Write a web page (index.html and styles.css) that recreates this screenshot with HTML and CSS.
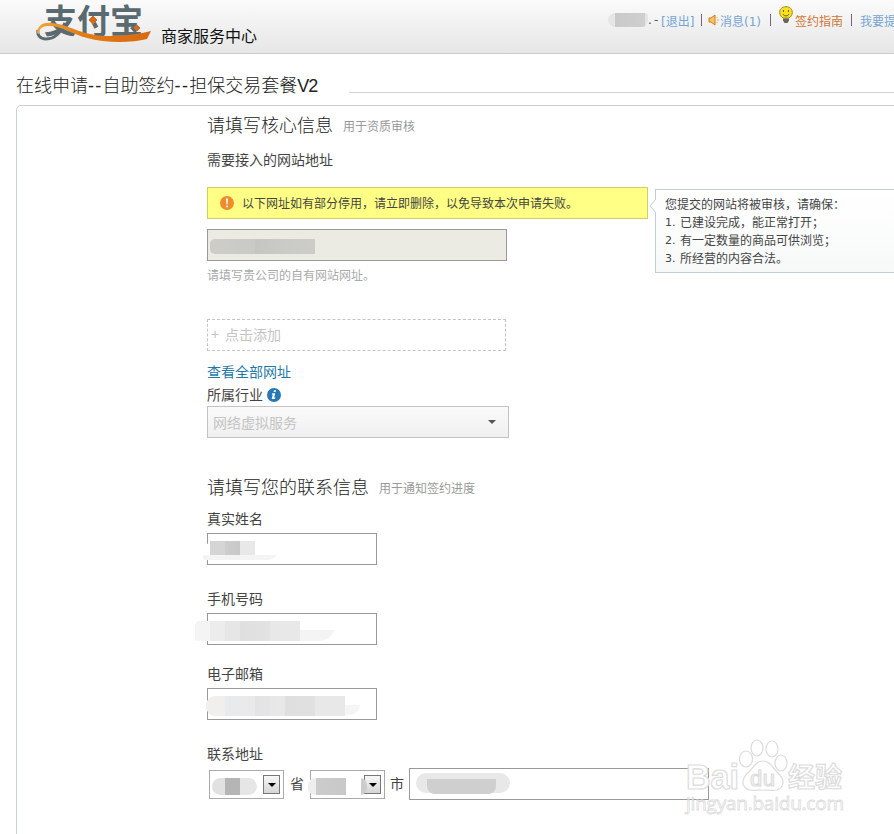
FILE: index.html
```html
<!DOCTYPE html>
<html lang="zh-CN">
<head>
    <meta charset="UTF-8">
    <meta name="viewport" content="width=device-width, initial-scale=1.0">
    <title>商家服务中心</title>
    <link rel="stylesheet" href="styles.css">
</head>
<body>
    <!-- Header -->
    <div class="header">
        <div class="logo">
            <span class="logo-text">支付宝</span>
            <svg class="logo-line" width="116" height="44" viewBox="0 0 116 44">
                <defs>
                    <linearGradient id="swoosh" x1="0" x2="1" y1="0" y2="0">
                        <stop offset="0" stop-color="#f0a63a"/>
                        <stop offset="0.4" stop-color="#e27b16"/>
                        <stop offset="1" stop-color="#d9690f"/>
                    </linearGradient>
                </defs>
                <path d="M29 23C24 33 19 39 10 39C4 39 1 35 2 30" fill="none" stroke="#596a70" stroke-width="3"/>
                <path d="M1 33C1 25 8 22 16 23C34 25 45 35 69 36C84 36 101 35 115 31L111 39C95 43 69 43 51 38C34 33 23 25 12 26C6 26 3 29 3 34Z" fill="url(#swoosh)"/>
                <path d="M57 16l4 4-4 4-4-4zM101 25l3 3-3 3-3-3z" fill="#d9691d" stroke="#d9691d"/>
            </svg>
        </div>
        <h1 class="site-name">商家服务中心</h1>
        <div class="top-links">
            <span class="blur-user"></span>
            <span class="dash">.&nbsp;-</span>
            <a class="logout">[退出]</a>
            <span class="line line-1"></span>
            <svg class="horn" width="11" height="12" viewBox="0 0 11 12">
                <path d="M1 4h2l4-3v10l-4-3H1z" fill="#f9c45c" stroke="#d07a1e"/>
                <path d="M9 3v1M9 6h2M9 8v1" stroke="#e8a758"/>
            </svg>
            <a class="news">消息(1)</a>
            <span class="line line-2"></span>
            <svg class="bulb" width="14" height="18" viewBox="0 0 14 18">
                <path d="M7 .7C3 .7.7 3.300.7 6.500c0 2.500 1.500 4.500 3.500 5.500h5.600c2-1 3.500-3 3.500-5.500C13.300 3.300 11 .7 7 .7z" fill="#f8e11f" stroke="#a08512"/>
                <path d="M4 12.500h6v2L8.500 17h-3L4 14.500z" fill="#66665f"/>
                <path d="M4.500 4v2M9.500 4v2M4 8c1 2.500 5 2.500 6 0" fill="none" stroke="#6d5d14"/>
            </svg>
            <a class="guide">签约指南</a>
            <span class="line line-3"></span>
            <a class="suggest">我要提</a>
        </div>
    </div>

    <div class="title-row">
        <h2 class="title">在线申请<span class="dashes">--</span>自助签约<span class="dashes">--</span>担保交易套餐<span class="version">V2</span></h2>
        <div class="title-line"></div>
    </div>

    <div class="panel">
        <!-- Core information -->
        <div class="section-title">
            <h3>请填写核心信息</h3>
            <span>用于资质审核</span>
        </div>
        <div class="label site-label">需要接入的网站地址</div>

        <div class="notice">
            <svg width="14" height="14" viewBox="0 0 14 14">
                <circle cx="7" cy="7" r="7" fill="#f08c2c"/>
                <path d="M6 2.500h2L7.600 8.300H6.400zM6.200 9.500h1.600v1.800H6.200z" fill="#fff"/>
            </svg>
            <span>以下网址如有部分停用，请立即删除，以免导致本次申请失败。</span>
            <div class="tip">
                <svg class="tip-arrow" width="7" height="14" viewBox="0 0 7 14">
                    <path d="M7 0L1 7l6 7" fill="#fff" stroke="#c4cdd6"/>
                </svg>
                <p>您提交的网站将被审核，请确保：</p>
                <p><span class="num">1.</span>已建设完成，能正常打开；</p>
                <p><span class="num">2.</span>有一定数量的商品可供浏览；</p>
                <p><span class="num">3.</span>所经营的内容合法。</p>
            </div>
        </div>

        <div class="field site-field">
            <input type="text" disabled>
            <span class="blur blur-site"></span>
        </div>
        <div class="hint">请填写贵公司的自有网站网址。</div>

        <div class="add-box"><span class="plus">+</span>点击添加</div>
        <a class="all-sites">查看全部网址</a>
        <div class="label trade-label">
            所属行业
            <svg width="14" height="14" viewBox="0 0 14 14">
                <circle cx="7" cy="7" r="7" fill="#2878b6"/>
                <path d="M7 2.300h2l-.4 1.800h-2zM5.200 5.200h3L7.200 9.600h1.200l-.3 1.500H4.700L5.800 6.600h-1z" fill="#fff"/>
            </svg>
        </div>
        <div class="select">
            <span>网络虚拟服务</span>
            <i class="arrow"></i>
        </div>

        <!-- Contact information -->
        <div class="section-title contact-title">
            <h3>请填写您的联系信息</h3>
            <span>用于通知签约进度</span>
        </div>
        <div class="form-group name-group">
            <div class="label">真实姓名</div>
            <div class="field">
                <input type="text">
                <span class="blur blur-name-tail"></span>
                <span class="blur blur-name"></span>
            </div>
        </div>
        <div class="form-group phone-group">
            <div class="label">手机号码</div>
            <div class="field">
                <input type="text">
                <span class="blur blur-phone-tail"></span>
                <span class="blur blur-phone"></span>
            </div>
        </div>
        <div class="form-group mail-group">
            <div class="label">电子邮箱</div>
            <div class="field">
                <input type="text">
                <span class="blur blur-mail-tail"></span>
                <span class="blur blur-mail"></span>
            </div>
        </div>
        <div class="form-group">
            <div class="label">联系地址</div>
            <div class="address">
                <div class="small-select">
                    <span class="blur blur-province"></span>
                    <span class="select-btn"><i class="arrow"></i></span>
                </div>
                <span class="unit">省</span>
                <div class="small-select">
                    <span class="blur blur-city"></span>
                    <span class="select-btn"><i class="arrow"></i></span>
                </div>
                <span class="unit">市</span>
                <div class="field address-field">
                    <input type="text">
                    <span class="blur blur-address-top"></span>
                    <span class="blur blur-address"></span>
                </div>
            </div>
        </div>
    </div>

    <!-- Watermark -->
    <svg class="watermark" width="162" height="84" viewBox="0 0 162 84">
        <g class="paw">
            <ellipse cx="62" cy="22" rx="6.500" ry="8"/>
            <ellipse cx="73" cy="11" rx="6" ry="8"/>
            <ellipse cx="88" cy="12" rx="6" ry="8"/>
            <ellipse cx="97" cy="26" rx="6" ry="8"/>
            <path d="M79 24C72 24 70 30 65 35C59 40 58 45 60 49C63 55 71 53 79 53C88 53 95 55 98 49C101 43 97 39 93 35C88 30 86 24 79 24Z"/>
        </g>
        <g class="mark-text">
            <text x="2" y="52" font-size="35" textLength="53" lengthAdjust="spacingAndGlyphs">Bai</text>
            <text class="mark-du" x="66" y="49" font-size="22" textLength="25">du</text>
            <text x="104" y="50" font-size="27">经验</text>
            <text class="mark-url" x="2" y="73" font-size="19" textLength="158">jingyan.baidu.com</text>
        </g>
    </svg>
</body>
</html>
```

FILE: styles.css
```css
* {
    margin: 0;
    padding: 0;
    box-sizing: border-box;
}

body {
    font-family: "Liberation Sans", "Noto Sans CJK SC", sans-serif;
    font-size: 14px;
    font-weight: 400;
    color: #444;
    background: #fff;
    width: 894px;
    height: 834px;
    overflow: hidden;
    position: relative;
}

svg {
    flex-shrink: 0;
    display: block;
}

/* Header */
.header {
    height: 54px;
    display: flex;
    padding-left: 36px;
    background: linear-gradient(#fbfbfb, #e6e6e6);
    border-bottom: 1px solid #ccc;
    overflow: hidden;
}

.logo {
    position: relative;
    width: 116px;
    height: 44px;
    flex-shrink: 0;
}

.logo-text {
    display: block;
    padding-left: 8px;
    font-family: "Noto Sans CJK SC", sans-serif;
    font-size: 33px;
    font-weight: 700;
    line-height: 39px;
    color: #596a70;
    white-space: nowrap;
}

.logo-line {
    position: absolute;
    left: 0;
    top: 0;
}

.site-name {
    width: 96px;
    margin-left: 9px;
    font-size: 16px;
    font-weight: 400;
    line-height: 73px;
    color: #111;
    white-space: nowrap;
}

.top-links {
    display: flex;
    align-items: center;
    height: 40px;
    margin-left: 351px;
    font-family: "DejaVu Sans", "Noto Sans CJK SC", sans-serif;
    font-size: 12px;
    white-space: nowrap;
    color: #555;
}

.top-links > * {
    flex-shrink: 0;
}

.blur-user {
    width: 40px;
    height: 14px;
    border-radius: 7px 3px 6px 7px;
    background: linear-gradient(90deg, #e6e6e6 7px, #c9c9c9 7px, #cfcfcf 37px, #e6e6e6 37px);
}

.dash {
    width: 13px;
    letter-spacing: -0.8px;
}

.logout,
.news,
.suggest {
    color: #75a5d3;
}

.logout {
    width: 34px;
}

.line {
    width: 1px;
    height: 12px;
    background: #75647c;
}

.line-1 {
    margin: 0 6px;
}

.news {
    width: 42px;
    margin-left: 1px;
}

.line-2 {
    margin: 0 8px;
}

.bulb {
    margin-bottom: 10px;
}

.guide {
    width: 48px;
    margin-left: 2px;
    color: #cf7635;
}

.line-3 {
    margin: 0 8px;
}

/* Page title */
.title-row {
    display: flex;
    align-items: center;
    height: 51px;
    padding: 12px 0 0 16px;
}

.title {
    width: 301px;
    margin-right: 32px;
    font-size: 18px;
    font-weight: 300;
    line-height: 26px;
    white-space: nowrap;
    color: #222;
}

.dashes {
    letter-spacing: 1.3px;
}

.version {
    letter-spacing: -1px;
}

.title-line {
    flex: 1;
    height: 1px;
    margin-top: 13px;
    background: #ccd3d3;
}

/* Main panel */
.panel {
    width: 900px;
    height: 760px;
    padding-left: 190px;
    border: 1px solid #c8cfcf;
    border-radius: 5px;
    margin-left: 16px;
}

.section-title {
    display: flex;
    align-items: center;
    height: 38px;
    padding-bottom: 2px;
}

.section-title h3 {
    font-size: 18px;
    font-weight: 300;
    color: #222;
}

.section-title span {
    margin: 3px 0 0 10px;
    font-size: 12px;
    color: #999;
}

.label {
    height: 24px;
    line-height: 24px;
}

.site-label {
    margin: 4px 0 15px;
}

/* Notice and tip */
.notice {
    position: relative;
    display: flex;
    align-items: center;
    gap: 8px;
    width: 441px;
    height: 32px;
    padding-left: 12px;
    font-size: 12px;
    background: #ffff85;
    border: 1px solid #d3cd68;
}

.notice > span {
    padding-bottom: 1px;
    white-space: nowrap;
}

.tip {
    position: absolute;
    left: 447px;
    top: 1px;
    width: 260px;
    height: 84px;
    padding: 6px 9px;
    white-space: nowrap;
    background: linear-gradient(#fff, #f7f9f9);
    border: 1px solid #c4cdd6;
}

.tip p {
    display: flex;
    height: 18px;
    line-height: 18px;
}

.tip-arrow {
    position: absolute;
    left: -7px;
    top: 9px;
}

.num {
    width: 15px;
    font-family: "DejaVu Sans", sans-serif;
    font-size: 11px;
}

/* Fields */
.field {
    position: relative;
    width: 170px;
    height: 32px;
}

.field input {
    display: block;
    width: 100%;
    height: 100%;
    background: #fff;
    border: 1px solid #999;
}

.site-field {
    width: 300px;
    margin-top: 10px;
}

.site-field input {
    background: #ebebe4;
}

.hint {
    height: 58px;
    padding-top: 5px;
    font-size: 12px;
    line-height: 20px;
    color: #aaa;
}

.add-box {
    display: flex;
    align-items: center;
    width: 299px;
    height: 32px;
    padding: 0 0 2px 3px;
    border: 1px dashed #c4c4c4;
    color: #c4c4c4;
}

.plus {
    width: 14px;
}

.all-sites {
    display: block;
    margin-top: 10px;
    height: 22px;
    line-height: 22px;
    color: #1f79a9;
}

.trade-label {
    display: flex;
    align-items: center;
    gap: 4px;
    height: 23px;
}

.select {
    display: flex;
    align-items: center;
    justify-content: space-between;
    width: 302px;
    height: 32px;
    padding: 0 12px 1px 5px;
    border: 1px solid #c3c3c3;
    background: linear-gradient(#fafafa, #f0f0f0);
    color: #c4c4c4;
}

.arrow {
    border: 4px solid transparent;
    border-top-color: #555;
    border-bottom: 0;
}

.contact-title {
    margin-top: 30px;
}

.form-group .label {
    margin-bottom: 2px;
}

.name-group {
    margin: 1px 0 22px;
}

.phone-group {
    margin-bottom: 17px;
}

.mail-group {
    margin-bottom: 22px;
}

.address {
    display: flex;
    align-items: center;
    padding-left: 2px;
}

.small-select {
    position: relative;
    display: flex;
    justify-content: flex-end;
    align-items: center;
    width: 75px;
    height: 29px;
    padding-right: 3px;
    margin-top: 1px;
    border: 1px solid #aaa;
}

.select-btn {
    display: flex;
    align-items: center;
    justify-content: center;
    width: 17px;
    height: 19px;
    border: 1px solid #777;
    background: linear-gradient(#f7f7f7, #d5d5d5);
}

.select-btn .arrow {
    border-top-color: #000;
}

.unit {
    width: 26px;
    text-align: center;
    line-height: 30px;
}

.address .unit:nth-of-type(2) {
    width: 24px;
}

.address-field {
    width: 300px;
}

/* Hidden private values */
.blur {
    position: absolute;
    display: block;
}

.blur-site {
    left: 3px;
    top: 10px;
    width: 105px;
    height: 15px;
    border-radius: 5px 0 0 5px;
    background: linear-gradient(90deg, #cdcdc9, #c9c9c5 45px, #c5c5c1 45px, #cacac7 75px, #ccccc9);
}

.blur-name {
    left: 3px;
    top: 8px;
    width: 45px;
    height: 14px;
    background: linear-gradient(90deg, #d5d5d5 15px, #cecece 15px, #c8c8c8 30px, #e8e8e8 30px);
}

.blur-name-tail {
    left: -4px;
    top: 10px;
    width: 77px;
    height: 17px;
    border-radius: 8px 0 14px 3px;
    background: linear-gradient(#fff 12px, #f4f4f4 12px);
}

.blur-phone {
    left: 3px;
    top: 8px;
    width: 90px;
    height: 20px;
    background: linear-gradient(90deg, #ececec 15px, #e6e6e6 15px, #e6e6e6 30px, #dfdfdf 30px, #e2e2e2 60px, #e8e8e8 60px);
}

.blur-phone-tail {
    left: -12px;
    top: 8px;
    width: 140px;
    height: 20px;
    border-radius: 5px 0 16px 3px;
    background: linear-gradient(90deg, #f4f4f4 15px, transparent 15px, transparent 105px, #f4f4f4 105px) 0 9px / 100% 11px no-repeat, linear-gradient(90deg, #f4f4f4 15px, #fff 15px);
}

.blur-mail {
    left: -1px;
    top: 8px;
    width: 139px;
    height: 20px;
    border-radius: 9px 0 0 9px;
    background: linear-gradient(90deg, #f0efed 19px, #e8eaec 19px, #e9e9e9 49px, #e2e3e5 49px, #e5e5e5 64px, #e7e7e7 64px, #e8e8e8 79px, #dfdfdf 79px, #e0e0e0 109px, #e8e8e8 109px);
}

.blur-mail-tail {
    left: 130px;
    top: 17px;
    width: 23px;
    height: 10px;
    border-radius: 0 0 14px 0;
    background: #f5f5f5;
}

.blur-province {
    left: 2px;
    top: 7px;
    width: 45px;
    height: 17px;
    border-radius: 9px;
    background: linear-gradient(90deg, #e1e1e1 13px, #b5b5b5 13px, #b5b5b5 28px, #e6e6e6 28px);
}

.blur-city {
    left: -3px;
    top: 7px;
    width: 59px;
    height: 17px;
    border-radius: 7px;
    background: linear-gradient(90deg, #eee 8px, #ccc 8px, #c8c8c8 38px, #fff 38px, #fff 53px, #ccc 53px);
}

.blur-address {
    left: 18px;
    top: 11px;
    width: 69px;
    height: 15px;
    border-radius: 0 0 8px 8px;
    background: #cfcfcf;
}

.blur-address-top {
    left: 7px;
    top: 5px;
    width: 94px;
    height: 20px;
    border-radius: 10px;
    background: #e8e8e8;
}

/* Watermark */
.watermark {
    position: absolute;
    left: 684px;
    top: 737px;
    overflow: visible;
}

.paw {
    fill: #fff;
    stroke: #dcdcdc;
    stroke-width: 1.2px;
}

.mark-text {
    font-family: "Liberation Sans", "Noto Sans CJK SC", sans-serif;
    font-weight: 700;
    fill: #fff;
    stroke: #dcdcdc;
    stroke-width: 1.2px;
}

.mark-du {
    font-weight: 400;
}

.mark-url {
    font-family: "Open Sans", sans-serif;
    font-weight: 400;
    stroke-width: 0.8px;
}
```
